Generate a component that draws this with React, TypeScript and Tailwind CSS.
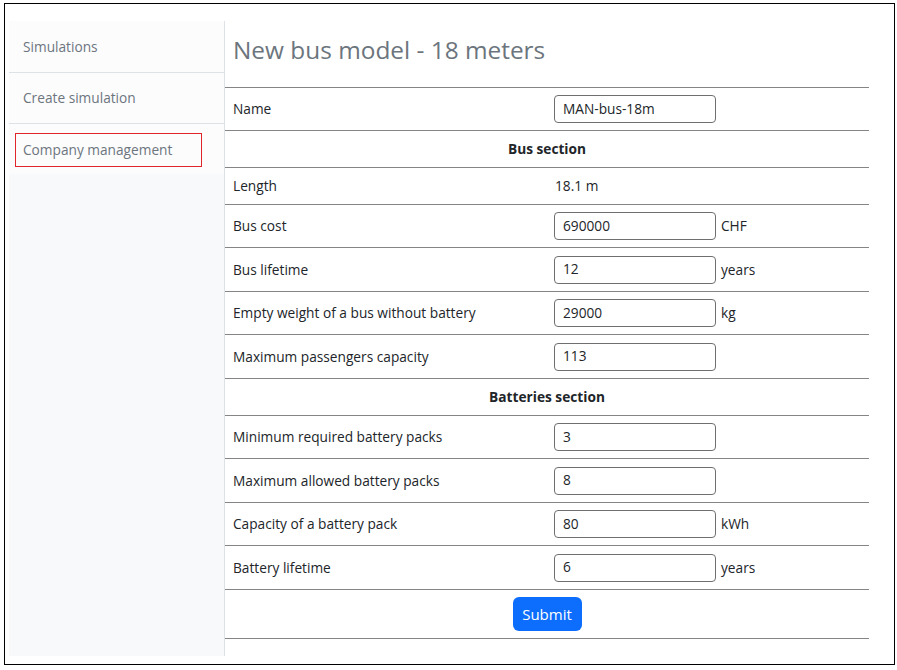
type Row =
  | { kind: "input"; label: string; value: string; unit?: string; h: string }
  | { kind: "text"; label: string; value: string; h: string }
  | { kind: "section"; label: string; h: string };

const rows: Row[] = [
  { kind: "input", label: "Name", value: "MAN-bus-18m", h: "h-[43px]" },
  { kind: "section", label: "Bus section", h: "h-[37px]" },
  { kind: "text", label: "Length", value: "18.1 m", h: "h-[37px]" },
  { kind: "input", label: "Bus cost", value: "690000", unit: "CHF", h: "h-[43px]" },
  { kind: "input", label: "Bus lifetime", value: "12", unit: "years", h: "h-[44px]" },
  { kind: "input", label: "Empty weight of a bus without battery", value: "29000", unit: "kg", h: "h-[43px]" },
  { kind: "input", label: "Maximum passengers capacity", value: "113", h: "h-[44px]" },
  { kind: "section", label: "Batteries section", h: "h-[37px]" },
  { kind: "input", label: "Minimum required battery packs", value: "3", h: "h-[43px]" },
  { kind: "input", label: "Maximum allowed battery packs", value: "8", h: "h-[44px]" },
  { kind: "input", label: "Capacity of a battery pack", value: "80", unit: "kWh", h: "h-[43px]" },
  { kind: "input", label: "Battery lifetime", value: "6", unit: "years", h: "h-[44px]" },
];

export default function App() {
  return (
    <div
      className="w-[897px] h-[670px] bg-white overflow-hidden text-[13.7px] text-[#212529]"
      style={{ fontFamily: '"Open Sans", "Noto Sans", sans-serif' }}
    >
      <div className="ml-[4px] mt-[3px] w-[891px] h-[662px] border border-black flex pt-[17px] pl-[4px] pb-[8px] pr-[25px]">
        {/* Sidebar */}
        <div className="w-[216px] shrink-0 bg-[#f8f9fa] border-r border-[#dee2e6] flex flex-col">
          <div className="h-[52px] bg-[#fcfcfd] border-b border-[#dee2e6] flex items-center pl-[14px] pt-[2px] text-[#6c757d]">
            Simulations
          </div>
          <div className="h-[51px] bg-[#fcfcfd] border-b border-[#dee2e6] flex items-center pl-[14px] pt-[1px] text-[#6c757d]">
            Create simulation
          </div>
          <div className="h-[50px] bg-[#fcfcfd] pt-[9px] pl-[6px]">
            <div className="w-[187px] h-[34px] border border-[#e0262b] flex items-center pl-[7px] text-[#6c757d]">
              Company management
            </div>
          </div>
        </div>

        {/* Main */}
        <div className="flex-1 flex flex-col">
          <h3 className="pt-[14px] pl-[8px] text-[24.4px] leading-[29px] font-medium text-[#6c757d]">
            New bus model - 18 meters
          </h3>
          <div className="mt-[23px] flex flex-col">
            {rows.map((r, i) => {
              if (r.kind === "section") {
                return (
                  <div
                    key={i}
                    className={`${r.h} border-t border-[#858585] flex items-center justify-center font-bold`}
                  >
                    {r.label}
                  </div>
                );
              }
              return (
                <div key={i} className={`${r.h} border-t border-[#858585] flex items-center`}>
                  <div className="w-[321px] shrink-0 pl-[8px] pt-[1px]">{r.label}</div>
                  <div className="flex items-center pl-[8px]">
                    {r.kind === "input" ? (
                      <>
                        <div className="w-[162px] h-[28px] border border-[#6f6f6f] rounded-[4px] flex items-center pl-[8px] bg-white">
                          {r.value}
                        </div>
                        {r.unit && <span className="ml-[5px] pt-[1px] text-[#212529]">{r.unit}</span>}
                      </>
                    ) : (
                      <span className="pl-[1px] pt-[1px]">{r.value}</span>
                    )}
                  </div>
                </div>
              );
            })}
            <div className="h-[50px] border-t border-b border-[#858585] flex justify-center pt-[7px]">
              <button className="w-[69px] h-[34px] rounded-[6px] bg-[#0d6efd] text-white text-[15px] flex items-center justify-center">
                Submit
              </button>
            </div>
          </div>
        </div>
      </div>
    </div>
  );
}
